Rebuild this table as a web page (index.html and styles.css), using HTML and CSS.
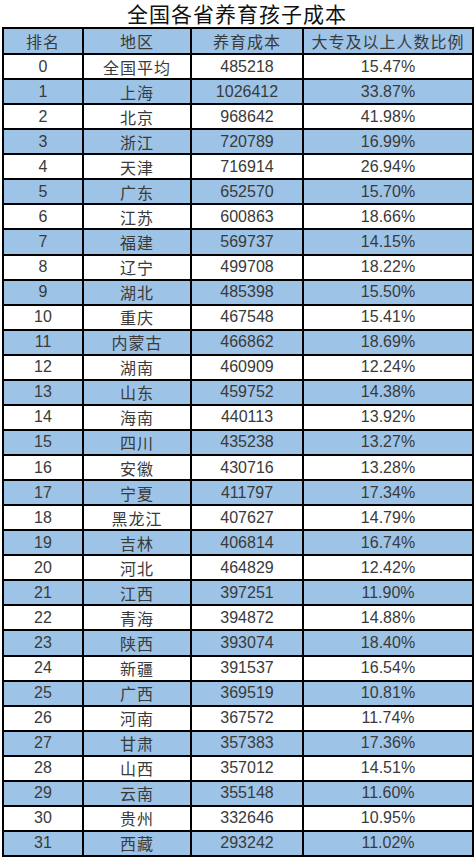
FILE: index.html
```html
<!DOCTYPE html>
<html lang="zh-CN">
<head>
<meta charset="utf-8">
<title>全国各省养育孩子成本</title>
<link rel="stylesheet" href="styles.css">
</head>
<body>
<div class="page">
  <h1 class="title">全国各省养育孩子成本</h1>
  <table class="grid">
    <colgroup>
      <col class="c1"><col class="c2"><col class="c3"><col class="c4">
    </colgroup>
    <thead>
      <tr class="head"><th>排名</th><th>地区</th><th>养育成本</th><th>大专及以上人数比例</th></tr>
    </thead>
    <tbody>
      <tr><td>0</td><td>全国平均</td><td>485218</td><td>15.47%</td></tr>
      <tr class="alt"><td>1</td><td>上海</td><td>1026412</td><td>33.87%</td></tr>
      <tr><td>2</td><td>北京</td><td>968642</td><td>41.98%</td></tr>
      <tr class="alt"><td>3</td><td>浙江</td><td>720789</td><td>16.99%</td></tr>
      <tr><td>4</td><td>天津</td><td>716914</td><td>26.94%</td></tr>
      <tr class="alt"><td>5</td><td>广东</td><td>652570</td><td>15.70%</td></tr>
      <tr><td>6</td><td>江苏</td><td>600863</td><td>18.66%</td></tr>
      <tr class="alt"><td>7</td><td>福建</td><td>569737</td><td>14.15%</td></tr>
      <tr><td>8</td><td>辽宁</td><td>499708</td><td>18.22%</td></tr>
      <tr class="alt"><td>9</td><td>湖北</td><td>485398</td><td>15.50%</td></tr>
      <tr><td>10</td><td>重庆</td><td>467548</td><td>15.41%</td></tr>
      <tr class="alt"><td>11</td><td>内蒙古</td><td>466862</td><td>18.69%</td></tr>
      <tr><td>12</td><td>湖南</td><td>460909</td><td>12.24%</td></tr>
      <tr class="alt"><td>13</td><td>山东</td><td>459752</td><td>14.38%</td></tr>
      <tr><td>14</td><td>海南</td><td>440113</td><td>13.92%</td></tr>
      <tr class="alt"><td>15</td><td>四川</td><td>435238</td><td>13.27%</td></tr>
      <tr><td>16</td><td>安徽</td><td>430716</td><td>13.28%</td></tr>
      <tr class="alt"><td>17</td><td>宁夏</td><td>411797</td><td>17.34%</td></tr>
      <tr><td>18</td><td>黑龙江</td><td>407627</td><td>14.79%</td></tr>
      <tr class="alt"><td>19</td><td>吉林</td><td>406814</td><td>16.74%</td></tr>
      <tr><td>20</td><td>河北</td><td>464829</td><td>12.42%</td></tr>
      <tr class="alt"><td>21</td><td>江西</td><td>397251</td><td>11.90%</td></tr>
      <tr><td>22</td><td>青海</td><td>394872</td><td>14.88%</td></tr>
      <tr class="alt"><td>23</td><td>陕西</td><td>393074</td><td>18.40%</td></tr>
      <tr><td>24</td><td>新疆</td><td>391537</td><td>16.54%</td></tr>
      <tr class="alt"><td>25</td><td>广西</td><td>369519</td><td>10.81%</td></tr>
      <tr><td>26</td><td>河南</td><td>367572</td><td>11.74%</td></tr>
      <tr class="alt"><td>27</td><td>甘肃</td><td>357383</td><td>17.36%</td></tr>
      <tr><td>28</td><td>山西</td><td>357012</td><td>14.51%</td></tr>
      <tr class="alt"><td>29</td><td>云南</td><td>355148</td><td>11.60%</td></tr>
      <tr><td>30</td><td>贵州</td><td>332646</td><td>10.95%</td></tr>
      <tr class="alt"><td>31</td><td>西藏</td><td>293242</td><td>11.02%</td></tr>
    </tbody>
  </table>
</div>
</body>
</html>
```
FILE: styles.css
```css
html, body {
  margin: 0;
  padding: 0;
  background: #ffffff;
}
.page {
  width: 475px;
  padding: 0 3px 0 2px;
  box-sizing: border-box;
  font-family: "Liberation Sans", "Noto Sans CJK SC", sans-serif;
}
.title {
  margin: 0;
  height: 27px;
  font-size: 21px;
  line-height: 25px;
  padding-top: 1px;
  box-sizing: border-box;
  font-weight: normal;
  text-align: center;
  color: #111111;
  font-family: "Noto Sans CJK SC", sans-serif;
  letter-spacing: 1px;
}
.grid {
  width: 470px;
  border-collapse: collapse;
  table-layout: fixed;
  border: 2px solid #000000;
}
.c1 { width: 80px; }
.c2 { width: 108px; }
.c3 { width: 112px; }
.c4 { width: 170px; }
.grid th,
.grid td {
  border: 2px solid #000000;
  padding: 0;
  text-align: center;
  font-size: 16px;
  line-height: 20px;
  color: #3a3a3a;
  font-weight: normal;
  white-space: nowrap;
}
.grid th {
  height: 24px;
  font-family: "Noto Sans CJK SC", sans-serif;
  letter-spacing: 1px;
}
.grid td {
  height: 23.07px;
}
.grid td:nth-child(2) {
  font-family: "Noto Sans CJK SC", sans-serif;
  letter-spacing: 1px;
}
.head th {
  background: #9dc3e6;
}
.alt td {
  background: #9dc3e6;
}
```
